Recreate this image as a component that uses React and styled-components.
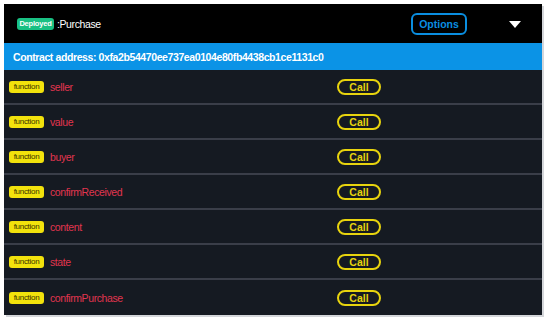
import React from 'react';
import styled, { createGlobalStyle } from 'styled-components';

const GlobalStyle = createGlobalStyle`
    body {
        margin: 0;
        background: #ffffff;
        font-family: "Liberation Sans", Arial, sans-serif;
    }
`

const functions = ['seller', 'value', 'buyer', 'confirmReceived', 'content', 'state', 'confirmPurchase'];

const App = () => {
    return (
        <Page>
            <GlobalStyle />
            <Panel>
                <Header>
                    <Title>
                        <Deployed>Deployed</Deployed>
                        <Name>:Purchase</Name>
                    </Title>
                    <Actions>
                        <OptionsButton>Options</OptionsButton>
                        <Caret />
                    </Actions>
                </Header>

                <AddressBar>
                    Contract address: 0xfa2b54470ee737ea0104e80fb4438cb1ce1131c0
                </AddressBar>

                {functions.map((fn) => (
                    <Row key={fn}>
                        <Left>
                            <FnBadge>function</FnBadge>
                            <FnName>{fn}</FnName>
                        </Left>
                        <CallButton>Call</CallButton>
                    </Row>
                ))}
            </Panel>
        </Page>
    )
}

export default App

const Page = styled.div`
    padding: 4px;
`

const Panel = styled.div`
    width: 538px;
    box-shadow: 2px 2px 0 #d4d6da;
    background: #151a22;
`

const Header = styled.div`
    height: 39px;
    background: #000;
    display: flex;
    align-items: center;
    justify-content: space-between;
    padding: 0 0 0 13px;
`

const Title = styled.div`
    display: flex;
    align-items: center;
    gap: 3px;
`

const Deployed = styled.span`
    background: #19c083;
    color: #fff;
    font-size: 7.5px;
    font-weight: bold;
    letter-spacing: -0.2px;
    height: 12px;
    line-height: 12px;
    border-radius: 3px;
    width: 37px;
    text-align: center;
`

const Name = styled.span`
    color: #fff;
    font-size: 10.5px;
    letter-spacing: -0.4px;
`

const Actions = styled.div`
    display: flex;
    align-items: center;
`

const OptionsButton = styled.button`
    width: 56px;
    height: 22px;
    border: 2px solid #0a8ee0;
    border-radius: 6px;
    background: transparent;
    color: #0a8ee0;
    font-family: "Liberation Sans", Arial, sans-serif;
    font-size: 10.5px;
    font-weight: bold;
    padding: 0;
    margin-right: 42px;
    cursor: pointer;
`

const Caret = styled.span`
    width: 0;
    height: 0;
    border-left: 6px solid transparent;
    border-right: 6px solid transparent;
    border-top: 7px solid #fff;
    margin-right: 21px;
    margin-top: 2px;
`

const AddressBar = styled.div`
    height: 27px;
    background: #0b93e6;
    color: #fff;
    font-size: 10.5px;
    letter-spacing: -0.4px;
    font-weight: bold;
    display: flex;
    align-items: center;
    padding-left: 9px;
`

const Row = styled.div`
    height: 35px;
    box-sizing: border-box;
    display: flex;
    align-items: center;
    padding-left: 5px;
    border-bottom: 2px solid #3a3e49;

    &:last-child {
        border-bottom: none;
    }
`

const Left = styled.div`
    display: flex;
    align-items: center;
    gap: 6px;
    width: 328px;
`

const FnBadge = styled.span`
    background: #f2e20c;
    color: #3a3300;
    font-size: 8px;
    letter-spacing: -0.3px;
    height: 12px;
    line-height: 12px;
    width: 35px;
    text-align: center;
    border-radius: 3px;
`

const FnName = styled.span`
    color: #e2354f;
    font-size: 10.5px;
    letter-spacing: -0.4px;
`

const CallButton = styled.button`
    width: 44px;
    height: 16px;
    box-sizing: border-box;
    border: 2px solid #e8d40e;
    border-radius: 8px;
    background: transparent;
    color: #e8d40e;
    font-family: "Liberation Sans", Arial, sans-serif;
    font-size: 10.5px;
    font-weight: bold;
    padding: 0;
    line-height: 12px;
`
